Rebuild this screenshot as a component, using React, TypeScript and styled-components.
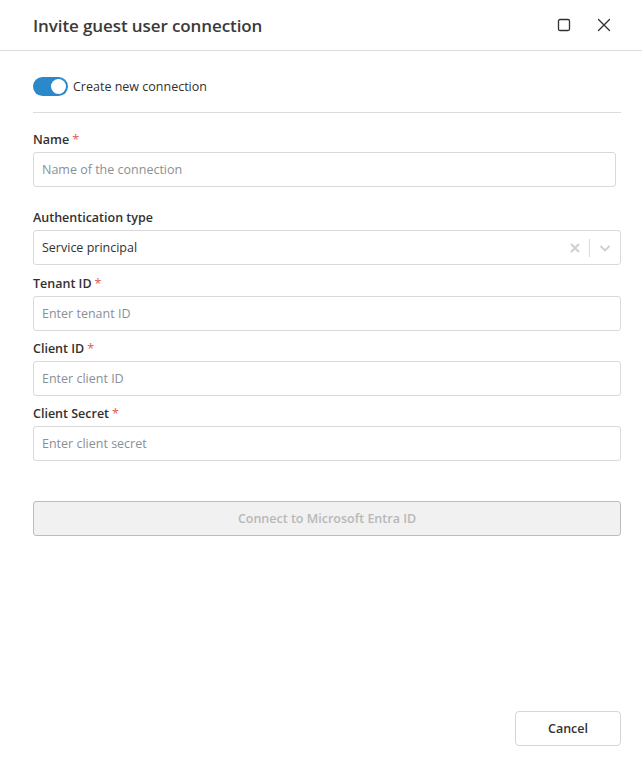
import React from 'react';
import styled, { createGlobalStyle } from 'styled-components';

const GlobalStyle = createGlobalStyle`
  html, body {
    margin: 0;
    padding: 0;
    background: #fff;
    font-family: "Open Sans", "Noto Sans", sans-serif;
    color: #323130;
  }
  * { box-sizing: border-box; }
`;

const Dialog = styled.div`
  width: 642px;
  height: 763px;
  display: flex;
  flex-direction: column;
  background: #fff;
`;

const Header = styled.div`
  height: 51px;
  display: flex;
  align-items: center;
  padding: 0 28px 0 33px;
  border-bottom: 1px solid #dcdcdc;
`;

const Title = styled.h1`
  flex: 1;
  margin: 0;
  font-size: 17px;
  font-weight: 600;
  color: #3b3a39;
  letter-spacing: -0.1px;
`;

const HeaderButtons = styled.div`
  display: flex;
  align-items: center;
  gap: 20px;
`;

const IconButton = styled.button`
  border: 0;
  background: none;
  padding: 0;
  width: 20px;
  height: 20px;
  display: flex;
  align-items: center;
  justify-content: center;
  color: #323130;
`;

const Body = styled.div`
  flex: 1;
  padding: 26px 21px 0 33px;
  display: flex;
  flex-direction: column;
`;

const ToggleRow = styled.label`
  display: flex;
  align-items: center;
  gap: 5px;
  font-size: 12.5px;
  color: #323130;
  height: 18px;
`;

const Track = styled.span`
  width: 35px;
  height: 19px;
  border-radius: 10px;
  background: #2b88c9;
  position: relative;
  display: inline-block;
`;

const Knob = styled.span`
  position: absolute;
  top: 2px;
  right: 2px;
  width: 15px;
  height: 15px;
  border-radius: 50%;
  background: #fff;
`;

const Divider = styled.hr`
  border: 0;
  border-top: 1px solid #dcdcdc;
  margin: 17px 0 18px;
`;

const Field = styled.div<{ $gap?: number }>`
  display: flex;
  flex-direction: column;
  margin-bottom: ${p => p.$gap ?? 0}px;
`;

const Label = styled.div`
  font-size: 12.5px;
  font-weight: 600;
  color: #323130;
  height: 18px;
  line-height: 18px;
  margin-bottom: 3px;
`;

const Required = styled.span`
  color: #e05a5a;
  margin-left: 3px;
  font-weight: 400;
`;

const Input = styled.input<{ $narrow?: boolean }>`
  height: 35px;
  width: ${p => (p.$narrow ? '583px' : '588px')};
  border: 1px solid #d9d9d9;
  border-radius: 3px;
  padding: 0 8px;
  font-family: inherit;
  font-size: 12.5px;
  color: #323130;
  &::placeholder { color: #8a8f98; }
  outline: none;
`;

const Select = styled.div`
  height: 35px;
  width: 588px;
  border: 1px solid #d9d9d9;
  border-radius: 3px;
  display: flex;
  align-items: center;
  padding-left: 8px;
  font-size: 12.5px;
  color: #323130;
`;

const SelectValue = styled.span`
  flex: 1;
`;

const SelectIcons = styled.div`
  display: flex;
  align-items: center;
  height: 100%;
  padding-right: 8px;
  gap: 8px;
`;

const Sep = styled.span`
  width: 1px;
  height: 18px;
  background: #dcdcdc;
`;

const PrimaryButton = styled.button`
  margin-top: 40px;
  height: 35px;
  width: 588px;
  background: #f0f1f0;
  border: 1px solid #bcbcbc;
  border-radius: 3px;
  font-family: inherit;
  font-size: 12.5px;
  font-weight: 600;
  color: #b8b8b8;
`;

const Footer = styled.div`
  display: flex;
  justify-content: flex-end;
  padding: 0 21px 17px 0;
`;

const CancelButton = styled.button`
  width: 106px;
  height: 35px;
  background: #fff;
  border: 1px solid #d6d6d6;
  border-radius: 4px;
  font-family: inherit;
  font-size: 12.5px;
  font-weight: 600;
  color: #323130;
`;

export default function App() {
  return (
    <>
      <GlobalStyle />
      <Dialog>
        <Header>
          <Title>Invite guest user connection</Title>
          <HeaderButtons>
            <IconButton aria-label="Maximize">
              <svg width="14" height="14" viewBox="0 0 14 14" fill="none">
                <rect x="1.5" y="1.5" width="11" height="11" rx="1.5" stroke="#323130" strokeWidth="1.3" />
              </svg>
            </IconButton>
            <IconButton aria-label="Close">
              <svg width="14" height="14" viewBox="0 0 14 14" fill="none">
                <path d="M1.5 1.5 L12.5 12.5 M12.5 1.5 L1.5 12.5" stroke="#323130" strokeWidth="1.3" strokeLinecap="round" />
              </svg>
            </IconButton>
          </HeaderButtons>
        </Header>
        <Body>
          <ToggleRow>
            <Track><Knob /></Track>
            Create new connection
          </ToggleRow>
          <Divider />
          <Field $gap={22}>
            <Label>Name<Required>*</Required></Label>
            <Input $narrow placeholder="Name of the connection" />
          </Field>
          <Field $gap={10}>
            <Label>Authentication type</Label>
            <Select>
              <SelectValue>Service principal</SelectValue>
              <SelectIcons>
                <svg width="12" height="12" viewBox="0 0 12 12">
                  <path d="M2 2 L10 10 M10 2 L2 10" stroke="#cfcfcf" strokeWidth="2" />
                </svg>
                <Sep />
                <svg width="14" height="14" viewBox="0 0 14 14" fill="none">
                  <path d="M2.5 5 L7 9.5 L11.5 5" stroke="#cfcfcf" strokeWidth="1.8" />
                </svg>
              </SelectIcons>
            </Select>
          </Field>
          <Field $gap={9}>
            <Label>Tenant ID<Required>*</Required></Label>
            <Input placeholder="Enter tenant ID" />
          </Field>
          <Field $gap={9}>
            <Label>Client ID<Required>*</Required></Label>
            <Input placeholder="Enter client ID" />
          </Field>
          <Field>
            <Label>Client Secret<Required>*</Required></Label>
            <Input placeholder="Enter client secret" />
          </Field>
          <PrimaryButton disabled>Connect to Microsoft Entra ID</PrimaryButton>
        </Body>
        <Footer>
          <CancelButton>Cancel</CancelButton>
        </Footer>
      </Dialog>
    </>
  );
}
